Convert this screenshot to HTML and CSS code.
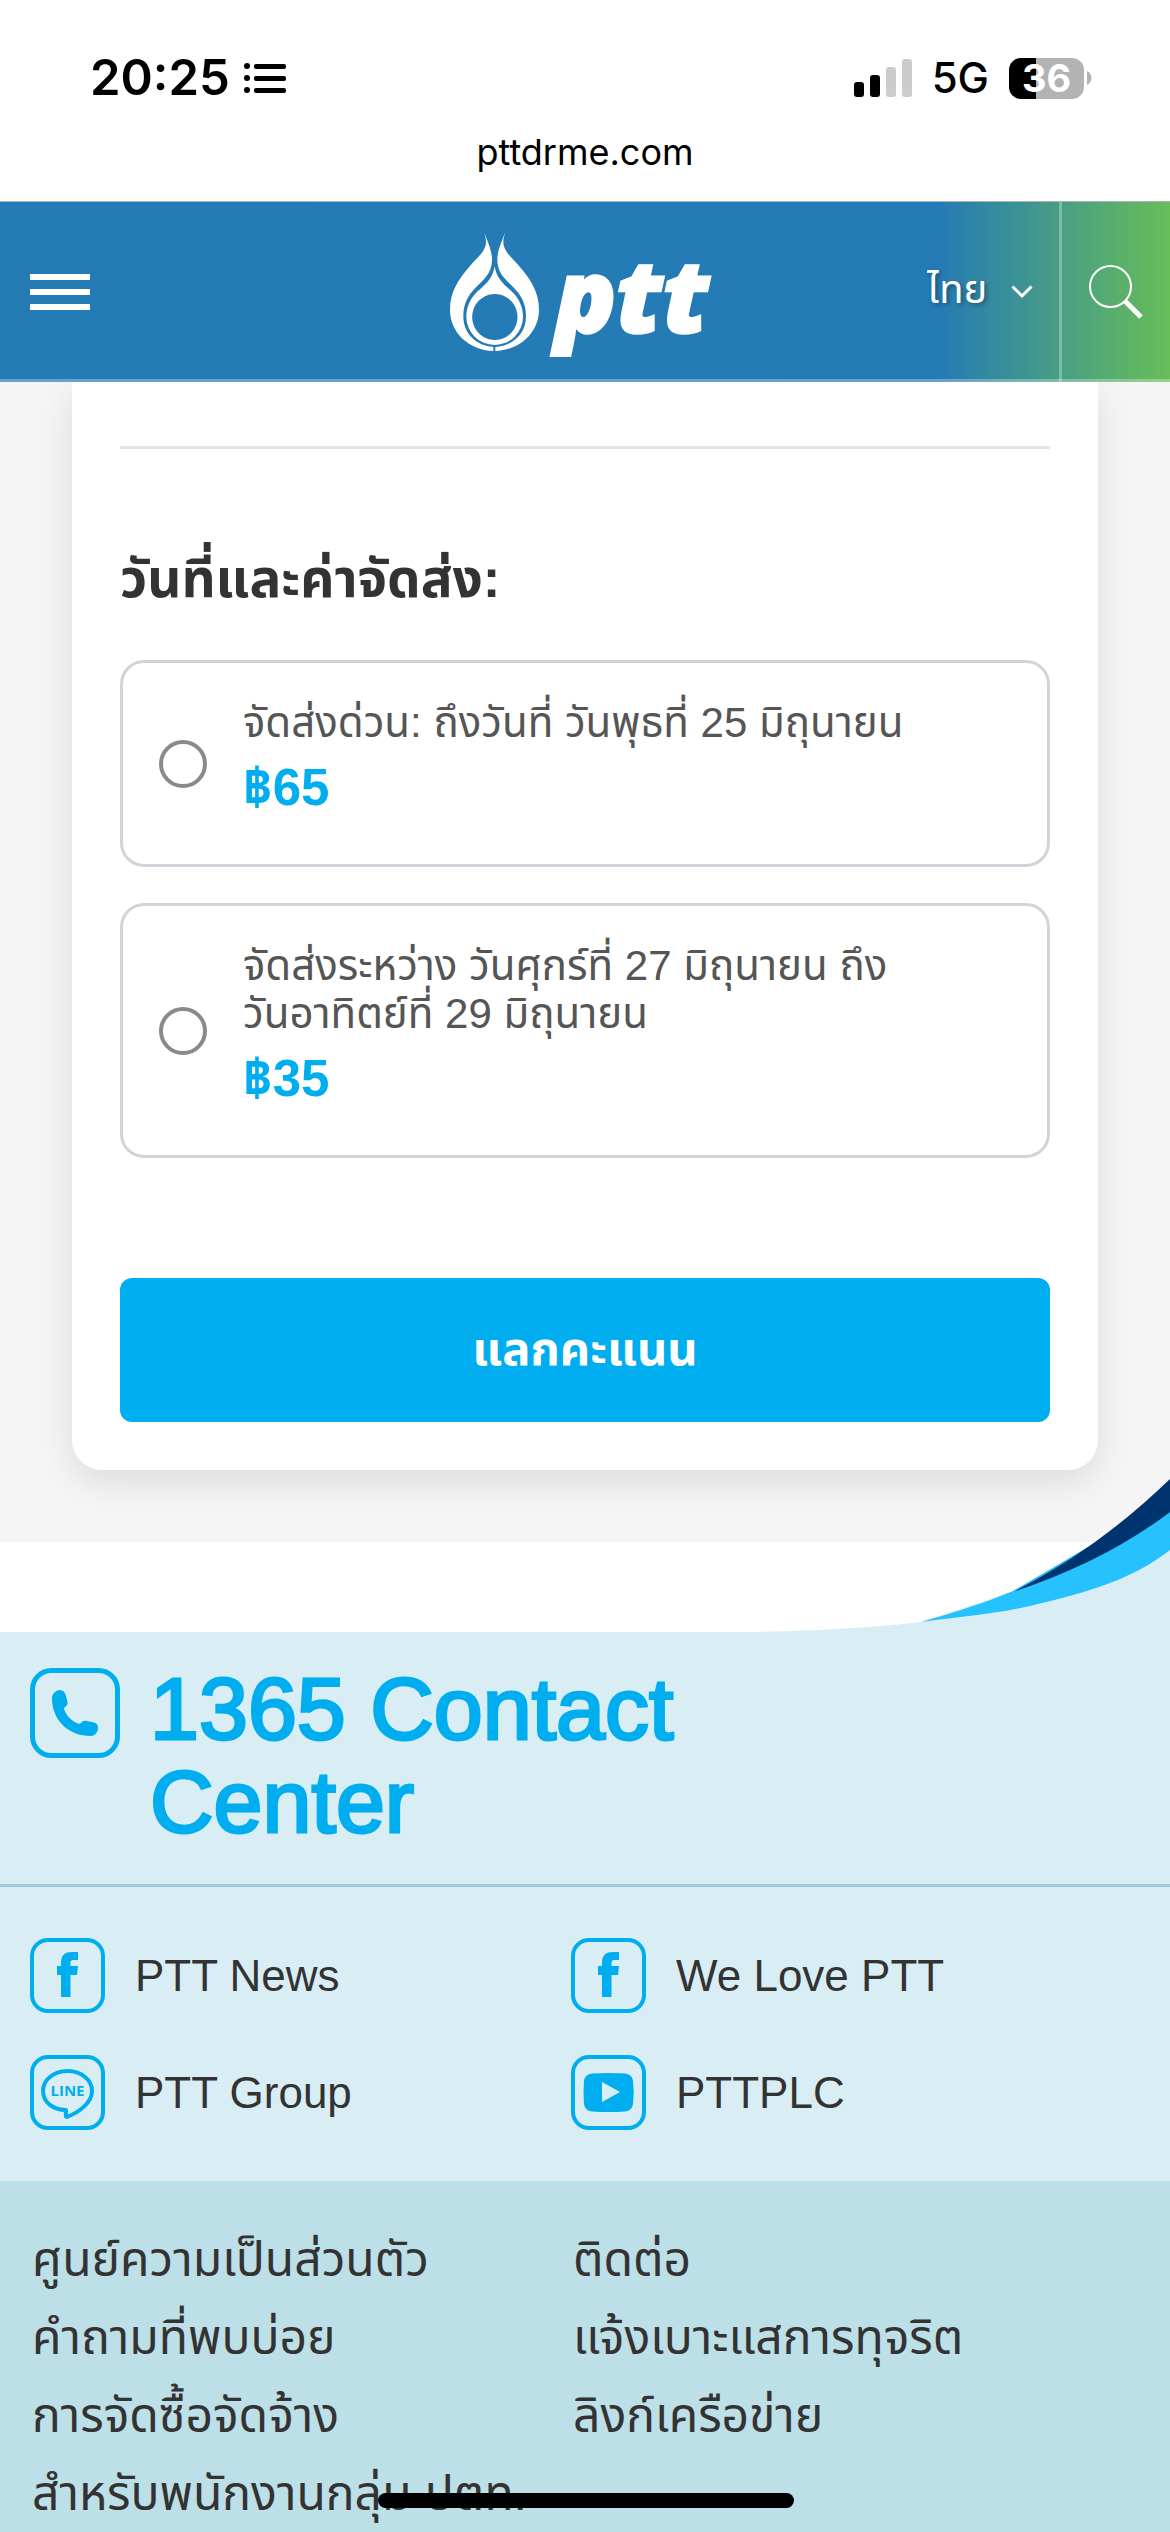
FILE: index.html
```html
<!DOCTYPE html>
<html lang="th">
<head>
<meta charset="utf-8">
<meta name="viewport" content="width=device-width, initial-scale=1">
<title>pttdrme.com</title>
<link rel="stylesheet" href="styles.css">
</head>
<body>
<div class="status">
  <div class="status-row">
    <div class="status-left">
      <span class="clock">20:25</span>
      <svg class="list-icon" width="43" height="32" viewBox="0 0 43 32" aria-hidden="true"><g fill="#000"><circle cx="3" cy="4" r="3"/><circle cx="3" cy="16" r="3"/><circle cx="3" cy="28" r="3"/><rect x="10" y="2" width="32" height="5" rx="2"/><rect x="10" y="14" width="32" height="5" rx="2"/><rect x="10" y="26" width="32" height="5" rx="2"/></g></svg>
    </div>
    <div class="status-right">
      <svg width="58" height="38" viewBox="0 0 58 38" aria-hidden="true"><rect x="0" y="23" width="10" height="15" rx="3"/><rect x="16" y="16" width="10" height="22" rx="3"/><rect x="32" y="8" width="10" height="30" rx="3" fill="#ccc"/><rect x="48" y="0" width="10" height="38" rx="3" fill="#ccc"/></svg>
      <span class="network">5G</span>
      <span class="battery"><span class="level">36</span><svg width="5" height="14" viewBox="0 0 5 14" aria-hidden="true"><path d="M0 0C6 3 6 11 0 14Z" fill="#b3b3b3"/></svg></span>
    </div>
  </div>
  <div class="address">pttdrme.com</div>
</div>

<header class="topbar">
  <button class="menu" type="button" aria-label="เมนู"><span></span><span></span><span></span></button>
  <a class="logo" href="#" aria-label="ptt">
    <svg width="280" height="130" viewBox="90 51 840 390" fill="#fff" aria-hidden="true">
      <path d="M193 67C197 84 216 118 216 148C216 190 192 208 168 232C143 257 130 283 130 318C130 370 166 406 220 411L220 423C145 420 90 366 90 299C90 243 117 207 148 170C171 143 198 124 198 95C198 84 194 75 193 67Z"/>
      <path d="M255 67C251 84 232 118 232 148C232 190 256 208 280 232C305 257 318 283 318 318C318 370 282 406 226 411L226 423C301 420 357 366 357 299C357 243 330 207 299 170C276 143 250 124 250 95C250 84 254 75 255 67Z"/>
      <path fill-rule="evenodd" d="M224 170C232 210 253 223 275 244C297 265 309 291 309 320A85 85 0 0 1 139 320C139 291 151 265 173 244C195 223 216 210 224 170ZM224 252A68 69 0 1 0 225 252Z"/>
      <text x="404" y="368" class="wordmark">ptt</text>
    </svg>
  </a>
  <label class="lang">
    <select aria-label="ภาษา"><option>ไทย</option></select>
    <svg width="22" height="14" viewBox="0 0 22 14" aria-hidden="true"><path d="M1.500 1.500L11 11L20.500 1.500" fill="none" stroke="#fff" stroke-width="3"/></svg>
  </label>
  <button class="search" type="button" aria-label="ค้นหา">
    <svg width="54" height="54" viewBox="0 0 54 54" fill="none" stroke="#fff" aria-hidden="true"><circle cx="21.500" cy="21.500" r="20.500" stroke-width="2"/><path d="M36 36L52 52" stroke-width="5"/></svg>
  </button>
</header>

<main class="page">
  <form class="card">
    <hr class="rule">
    <h2 class="heading" id="ship">วันที่และค่าจัดส่ง:</h2>
    <div class="options" role="radiogroup" aria-labelledby="ship">
      <label class="option">
        <input type="radio" name="shipping" value="65">
        <span class="detail"><span class="when">จัดส่งด่วน: ถึงวันที่ วันพุธที่ 25 มิถุนายน</span><strong class="price">฿65</strong></span>
      </label>
      <label class="option">
        <input type="radio" name="shipping" value="35">
        <span class="detail"><span class="when">จัดส่งระหว่าง วันศุกร์ที่ 27 มิถุนายน ถึง<br>วันอาทิตย์ที่ 29 มิถุนายน</span><strong class="price">฿35</strong></span>
      </label>
    </div>
    <button class="redeem" type="submit">แลกคะแนน</button>
  </form>
</main>

<footer class="footer">
  <svg class="wave" width="420" height="153" viewBox="0 0 420 153" aria-hidden="true">
    <path d="M0 153C60 152 120 149 171 143L420 60V153Z" fill="#d9edf4"/>
    <path d="M171 143C205 133 235 124 263 112L420 20V71C385 99 340 113 280 127C245 135 210 138 171 143Z" fill="#26c2ff"/>
    <path d="M263 113C325 81 372 46 420 0V33C375 67 325 92 263 113Z" fill="#00346f"/>
  </svg>
  <a class="contact" href="tel:1365">
    <svg width="90" height="90" viewBox="0 0 90 90" aria-hidden="true"><rect x="2.500" y="2.500" width="85" height="85" rx="19" fill="none" stroke="#00aef0" stroke-width="5"/><path fill="#00aef0" d="M22 30C22 25 27 22 30 22C33 22 35 24 36 28L37.500 34C38 37 36 38.500 34 40C35 47 43 55 50 56C52 53 54 52.500 57 53L64 54.500C67 55.500 68 57 68 60C68 64 65 68 61 68C38 68 22 52 22 30Z"/></svg>
    <span>1365 Contact Center</span>
  </a>
  <nav class="social" aria-label="โซเชียล">
    <a href="#"><svg width="75" height="75" viewBox="0 0 75 75" aria-hidden="true"><rect class="frame" x="2" y="2" width="71" height="71" rx="16"/><path fill="#00aef0" d="M31 59V37H27V28H31V25C31 17 35 14 42 14H48V22H44C41 22 40.500 23 40.500 25.500V28H48L47 37H40.500V59Z"/></svg><span>PTT News</span></a>
    <a href="#"><svg width="75" height="75" viewBox="0 0 75 75" aria-hidden="true"><rect class="frame" x="2" y="2" width="71" height="71" rx="16"/><path fill="#00aef0" d="M31 59V37H27V28H31V25C31 17 35 14 42 14H48V22H44C41 22 40.500 23 40.500 25.500V28H48L47 37H40.500V59Z"/></svg><span>We Love PTT</span></a>
    <a href="#"><svg width="75" height="75" viewBox="0 0 75 75" aria-hidden="true"><rect class="frame" x="2" y="2" width="71" height="71" rx="16"/><path d="M37.500 16C51 16 62 24.500 62 36C62 48 49 57 37 62C35 62 36 59 36 55C23 55 13 47 13 36C13 24.500 24 16 37.500 16Z" fill="none" stroke="#00aef0" stroke-width="4" stroke-linejoin="round"/><text class="line-mark" x="37.500" y="41" text-anchor="middle">LINE</text></svg><span>PTT Group</span></a>
    <a href="#"><svg width="75" height="75" viewBox="0 0 75 75" aria-hidden="true"><rect class="frame" x="2" y="2" width="71" height="71" rx="16"/><path fill="#00aef0" fill-rule="evenodd" d="M21 18.500Q37.500 17.500 54 18.500Q61 19 62 26Q63.500 37 62 49Q61 56 54 56.500Q37.500 57.500 21 56.500Q14 56 13 49Q12 37 13 26Q14 19 21 18.500ZM31 27V47L49 37Z"/></svg><span>PTTPLC</span></a>
  </nav>
  <nav class="links" aria-label="ลิงก์">
    <a href="#">ศูนย์ความเป็นส่วนตัว</a>
    <a href="#">ติดต่อ</a>
    <a href="#">คำถามที่พบบ่อย</a>
    <a href="#">แจ้งเบาะแสการทุจริต</a>
    <a href="#">การจัดซื้อจัดจ้าง</a>
    <a href="#">ลิงก์เครือข่าย</a>
    <a href="#">สำหรับพนักงานกลุ่ม ปตท.</a>
  </nav>
</footer>
<div class="home-bar"></div>
</body>
</html>
```
FILE: styles.css
```css
* { box-sizing: border-box; }
body {
  margin: 0;
  min-height: 100vh;
  display: flex;
  flex-direction: column;
  background: #fff;
  color: #333;
  font-family: "Liberation Sans", "Noto Sans Thai", sans-serif;
}
svg { display: block; flex: none; }
a { color: inherit; text-decoration: none; }
button { border: 0; padding: 0; background: none; font-family: inherit; }

.status { height: 202px; padding-top: 48px; border-bottom: 1px solid #b0b0b0; font-family: Inter, sans-serif; color: #000; }
.status-row { display: flex; justify-content: space-between; align-items: center; height: 60px; padding: 0 78px 0 90px; }
.status-left { display: flex; align-items: center; gap: 14px; }
.clock { font-size: 49px; font-weight: 600; line-height: 60px; }
.status-right { display: flex; align-items: center; gap: 20px; }
.network { font-size: 42px; font-weight: 500; line-height: 60px; }
.battery { display: flex; align-items: center; gap: 3px; }
.level { width: 75px; height: 41px; border-radius: 12px; background: linear-gradient(90deg, #000 36%, #b3b3b3 36%); color: #fff; font-size: 38px; font-weight: 700; line-height: 41px; text-align: center; }
.address { margin-top: 22px; font-size: 36px; line-height: 44px; text-align: center; }

.topbar { display: grid; grid-template-columns: 450px auto 1fr 111px; height: 180px; align-items: center; border-bottom: 3px solid rgba(255, 255, 255, .3); background: linear-gradient(90deg, #257cb4 0, #247ab5 80%, #68be58 100%) border-box; }
.menu { display: grid; gap: 9px; width: 60px; margin-left: 30px; }
.menu span { height: 6px; background: #fff; }
.wordmark { font: italic 800 305px "Open Sans", sans-serif; stroke: #fff; stroke-width: 7px; }
.lang { display: grid; align-items: center; justify-self: end; width: 132px; }
.lang select { grid-area: 1 / 1; width: 132px; height: 60px; padding: 0 0 6px; border: 0; appearance: none; background: none; color: #fff; font-family: inherit; font-size: 40px; text-shadow: 2px 2px 4px rgba(0, 0, 0, .35); }
.lang svg { grid-area: 1 / 1; margin-left: 84px; pointer-events: none; }
.search { display: flex; height: 180px; align-items: center; padding-left: 27px; border-left: 3px solid rgba(255, 255, 255, .3); }

.page { padding: 0 72px 72px; background: #f5f5f5; overflow: hidden; }
.card { padding: 64px 48px 48px; border-radius: 0 0 30px 30px; background: #fff; box-shadow: 0 12px 36px rgba(0, 0, 0, .1); }
.rule { margin: 0; border: 0; height: 3px; background: #e5e5e5; }
.heading { margin: 96px 0 0; font-size: 53px; line-height: 68px; color: #333; }
.options { display: grid; gap: 36px; margin-top: 47px; }
.option { display: flex; align-items: center; gap: 36px; padding: 36px; border: 3px solid #d1d5db; border-radius: 24px; }
.option input { flex: none; appearance: none; width: 48px; height: 48px; margin: 0; border: 4px solid #8a8a8e; border-radius: 50%; background: #fff; }
.detail { display: grid; gap: 12px; padding-bottom: 12px; }
.when { font-size: 42px; line-height: 48px; color: #555; }
.price { font-size: 51px; line-height: 57px; color: #00aef0; }
.redeem { display: block; width: 100%; height: 144px; margin-top: 120px; border-radius: 12px; background: #00aef0; color: #fff; font-size: 47px; font-weight: 700; }

.footer { position: relative; flex: 1; display: flex; flex-direction: column; margin-top: 90px; background: #d9edf4; }
.wave { position: absolute; right: 0; bottom: 100%; }
.contact { display: flex; gap: 30px; padding: 30px 30px 36px; border-bottom: 3px solid #a2cbe2; color: #00aef0; font-size: 88px; line-height: 93px; }
.contact svg { margin-top: 6px; }
.contact span { width: 600px; -webkit-text-stroke: 3px #00aef0; }
.social { display: grid; grid-template-columns: 541px 1fr; row-gap: 42px; padding: 51px 30px; }
.social a { display: flex; align-items: center; gap: 30px; font-size: 44px; line-height: 75px; }
.frame { fill: none; stroke: #00aef0; stroke-width: 4px; }
.line-mark { fill: #00aef0; font: 700 15px "Open Sans", sans-serif; }
.links { flex: 1; display: grid; grid-template-columns: 541px 1fr; grid-auto-rows: 78px; padding: 40px 32px 0; background: #bddfe7; }
.links a { font-size: 48px; line-height: 78px; white-space: nowrap; }
.home-bar { position: fixed; left: 50%; bottom: 24px; width: 416px; height: 15px; margin-left: -207px; border-radius: 8px; background: #000; }
```
